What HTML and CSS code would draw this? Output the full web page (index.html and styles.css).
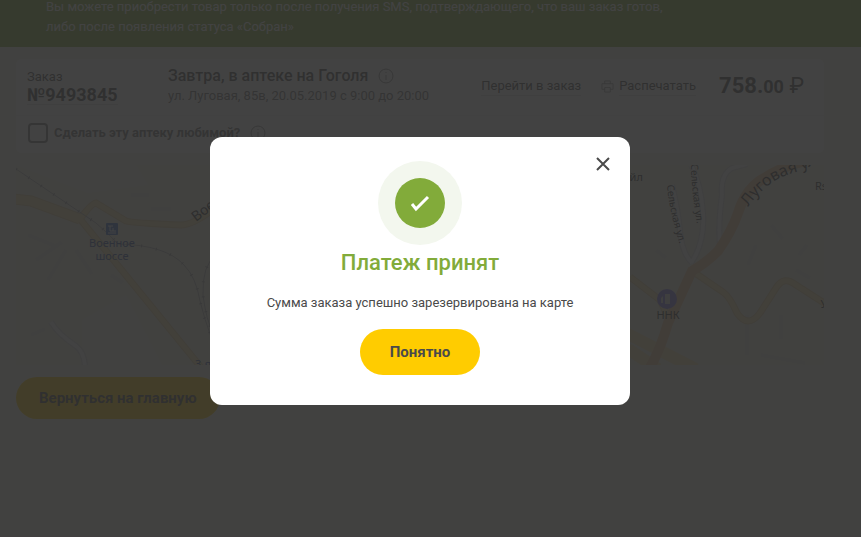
FILE: index.html
```
<!DOCTYPE html>
<html lang="ru">
    <head>
        <meta charset="UTF-8">
        <meta name="viewport" content="width=device-width, initial-scale=1">
        <title>Платеж принят</title>
        <link rel="stylesheet" href="styles.css">
    </head>
    <body>
        <div class="notice">
            <p>Вы можете приобрести товар только после получения SMS, подтверждающего, что ваш заказ готов, либо после появления статуса «Собран»</p>
        </div>

        <main class="content">
            <section class="order">
                <div class="order-head">
                    <div class="order-number">
                        <span>Заказ</span>
                        <a href="#">№9493845</a>
                    </div>
                    <div class="order-place">
                        <h2>Завтра, в аптеке на Гоголя
                            <svg class="info" viewBox="0 0 16 16"><circle cx="8" cy="8" r="7"/><path d="M8 7v5M8 4v1"/></svg>
                        </h2>
                        <p>ул. Луговая, 85в, 20.05.2019 с 9:00 до 20:00</p>
                    </div>
                    <a class="order-link" href="#">Перейти в заказ</a>
                    <div class="print">
                        <svg viewBox="0 0 14 14"><path d="M4 4V1h6v3M4 10H1V4h12v6h-3M4 8h6v5H4z"/></svg>
                        <a class="order-link" href="#">Распечатать</a>
                    </div>
                    <div class="price">758.<small>00</small> <span>₽</span></div>
                </div>
                <div class="favorite">
                    <input type="checkbox" id="favorite">
                    <label for="favorite">Сделать эту аптеку любимой?</label>
                    <svg class="info" viewBox="0 0 16 16"><circle cx="8" cy="8" r="7"/><path d="M8 7v5M8 4v1"/></svg>
                </div>
            </section>

            <svg class="map" viewBox="0 0 808 200" preserveAspectRatio="xMidYMid slice">
                <rect class="land" width="808" height="200"/>
                <!-- blocks -->
                <path class="block" d="M66 155l44-25 36 70H66zM0 0h120l12 20-60 8z"/>
                <path class="shade" d="M12 70l30 12M20 95l26-18M32 115l18-30M60 85l16 24M95 110l12 8M15 170l14-6M115 30h18M135 44h20M640 85l10 8M755 60l12 14M780 105l14 8M740 80l-8 20M731 150v40M765 150v24M783 90l8-10M745 190l44 8"/>
                <!-- side streets -->
                <path class="street-edge" d="M35 157q7 12 25 24q8 6 9 20M675 98q14-20 12-50q-2-30-12-48M676 98Q666 88 664 66T656 20M704 80q-2-20 2-50q-2-20 10-27l15-4"/>
                <path class="street" d="M35 157q7 12 25 24q8 6 9 20M675 98q14-20 12-50q-2-30-12-48M676 98Q666 88 664 66T656 20M704 80q-2-20 2-50q-2-20 10-27l15-4"/>
                <!-- main roads -->
                <path class="road-edge wide" d="M-2 34L15 36L64 54"/>
                <path class="road-edge" d="M64 54L188 206M64 54Q76 38 80 38L110 56Q116 58 165 60Q176 60 195 46M614 112L644 135L652 152M679 108L707 127Q714 132 721 148Q732 164 744 148L760 123Q768 110 780 120L808 138"/>
                <path class="road wide" d="M-2 34L15 36L64 54"/>
                <path class="road" d="M64 54L188 206M64 54Q76 38 80 38L110 56Q116 58 165 60Q176 60 195 46M614 112L644 135L652 152M679 108L707 127Q714 132 721 148Q732 164 744 148L760 123Q768 110 780 120L808 138"/>
                <path class="road ramp" d="M610 168L680 204M612 184l30 20"/>
                <path class="highway" d="M632 206Q644 186 652 158L676 106Q690 98 702 86Q716 66 722 48Q730 22 750 12Q765 2 790 -4"/>
                <!-- railway -->
                <path class="rail" d="M0 4L80 58Q92 68 102 79Q150 80 168 100Q180 112 184 136Q194 176 205 190M200 90Q186 100 187 130Q190 155 198 170"/>
                <path class="rail-ties" d="M0 4L80 58Q92 68 102 79Q150 80 168 100Q180 112 184 136Q194 176 205 190M200 90Q186 100 187 130Q190 155 198 170"/>
                <!-- station -->
                <rect class="station" x="90" y="58" width="12" height="12" rx="1"/>
                <path class="sign" d="M92 61h5M94 61v5h6M97 63v3M92 68h8"/>
                <text class="station-name" x="96" y="82">Военное</text>
                <text class="station-name" x="96" y="95">шоссе</text>
                <text class="station-name" x="187" y="203">3-я</text>
                <!-- fuel -->
                <circle class="fuel" cx="651" cy="134" r="10"/>
                <path class="pump" d="M649 129h5v10h-5zM647 138h-2v-5l2-2"/>
                <text class="place" x="652" y="154">ННК</text>
                <text class="place" x="617" y="16">ойл</text>
                <text class="place" x="805" y="25">Rs</text>
                <text class="place" x="808" y="143">У</text>
                <!-- street names -->
                <defs>
                    <path id="lugovaya" d="M732 42Q752 14 780 7Q800 0 830 -18"/>
                    <path id="selskaya-1" d="M651 20Q653 46 664 80"/>
                    <path id="selskaya-2" d="M675 -1Q675 24 682 66"/>
                    <path id="voennoe" d="M180 57L210 34"/>
                </defs>
                <text class="street-name big"><textPath href="#lugovaya">Луговая ул.</textPath></text>
                <text class="street-name"><textPath href="#selskaya-1">Сельская ул.</textPath></text>
                <text class="street-name"><textPath href="#selskaya-2">Сельская ул.</textPath></text>
                <text class="street-name medium"><textPath href="#voennoe">Воен</textPath></text>
            </svg>

            <button class="btn btn-home">Вернуться на главную</button>
        </main>

        <div class="overlay">
            <div class="modal" role="dialog" aria-labelledby="modal-title">
                <button class="close" aria-label="Закрыть">
                    <svg viewBox="0 0 14 14"><path d="M1 1l12 12M13 1L1 13"/></svg>
                </button>
                <div class="success">
                    <svg viewBox="0 0 84 84">
                        <circle class="halo" cx="42" cy="42" r="42"/>
                        <circle class="disc" cx="42" cy="42" r="25"/>
                        <path d="M34 43l4 5 12-12"/>
                    </svg>
                </div>
                <h1 id="modal-title">Платеж принят</h1>
                <p>Сумма заказа успешно зарезервирована на карте</p>
                <button class="btn btn-ok">Понятно</button>
            </div>
        </div>
    </body>
</html>
```
FILE: styles.css
```
* {
    box-sizing: border-box;
}
body {
    margin: 0;
    min-height: 100vh;
    background-color: #f6f6e6;
    border-bottom: 1px solid #ffe0e6;
    color: #4a4a4a;
    font-family: Roboto, sans-serif;
    font-size: 13px;
    line-height: 20px;
}
h1, h2, p {
    margin: 0;
}
a {
    color: inherit;
    text-decoration: none;
    border-bottom: 1px solid #dcdcdc;
}
button {
    font-family: inherit;
    cursor: pointer;
}

.notice {
    margin-top: -3px;
    padding: 0 0 10px 46px;
    background-color: #82ab3a;
    color: #fff;
}
.notice p {
    max-width: 640px;
}

.content {
    display: flex;
    flex-direction: column;
    align-items: flex-start;
    gap: 12px;
    padding: 12px 37px 16px 16px;
}

/* Order card */
.order {
    width: 100%;
    background-color: #fff;
    border-radius: 6px;
}
.order-head {
    display: grid;
    grid-template-columns: 141px 1fr auto auto auto;
    align-items: center;
    height: 57px;
    padding: 0 20px 2px 11px;
    border-bottom: 1px solid #eee;
}
.order-number {
    display: flex;
    flex-direction: column;
    align-items: flex-start;
    line-height: 18px;
}
.order-number a {
    font-size: 18px;
    font-weight: bold;
}
.order-place h2 {
    display: flex;
    align-items: center;
    gap: 10px;
    font-size: 16px;
    font-weight: 500;
}
.order-place p {
    color: #707070;
}
.order-link {
    line-height: 18px;
}
.print {
    display: flex;
    align-items: center;
    gap: 5px;
    margin: 0 23px 0 20px;
}
.print svg {
    width: 13px;
    height: 13px;
    fill: none;
    stroke: #999;
}
.price {
    font-size: 22px;
    font-weight: bold;
    line-height: 30px;
}
.price small {
    font-size: 18px;
}
.price span {
    font-weight: normal;
}
.info {
    width: 16px;
    height: 16px;
    fill: none;
    stroke: #8c8c8c;
}
.favorite {
    display: flex;
    align-items: center;
    height: 37px;
    padding: 0 0 3px 12px;
    font-weight: bold;
    color: #707070;
}
.favorite input {
    appearance: none;
    width: 20px;
    height: 20px;
    margin: 0 6px 0 0;
    border: 2px solid #777;
    border-radius: 4px;
}
.favorite .info {
    margin-left: 10px;
}

/* Map */
.map {
    display: block;
    width: 100%;
    height: 200px;
    font-family: "Noto Sans", sans-serif;
}
.map path {
    fill: none;
}
.map .land {
    fill: #f1f1e2;
}
.map .block {
    fill: #ededE4;
}
.map .shade {
    stroke: #eaeae0;
    stroke-width: 4;
}
.map .street-edge {
    stroke: #d8d8d8;
    stroke-width: 6;
}
.map .street {
    stroke: #f8f8f8;
    stroke-width: 4;
}
.map .road-edge {
    stroke: #e8d09c;
    stroke-width: 7;
}
.map .road {
    stroke: #fae8ac;
    stroke-width: 5;
}
.map .road-edge.wide {
    stroke-width: 11;
}
.map .road.wide {
    stroke-width: 9;
}
.map .road.ramp {
    stroke-width: 12;
}
.map .highway {
    stroke: #f5c898;
    stroke-width: 10;
}
.map .rail {
    stroke: #b4b4b4;
}
.map .rail-ties {
    stroke: #a0a0a0;
    stroke-width: 3;
    stroke-dasharray: 1 14;
}
.map .station {
    fill: #3c6ec8;
}
.map .sign {
    stroke: #fff;
}
.map text {
    fill: #333;
    text-anchor: middle;
    font-size: 11px;
}
.map .station-name {
    fill: #3250a0;
}
.map .fuel {
    fill: #8278e6;
}
.map .pump {
    fill: #ddd;
}
.map .street-name {
    text-anchor: start;
    font-size: 10px;
}
.map .street-name.medium {
    font-size: 14px;
}
.map .street-name.big {
    font-size: 16px;
}

/* Buttons */
.btn {
    border: none;
    border-radius: 23px;
    background-color: #fc0;
    color: #4a4a4a;
    font-size: 15px;
    font-weight: bold;
}
.btn-home {
    height: 42px;
    padding: 0 23px;
}
.btn-ok {
    height: 46px;
    padding: 0 30px;
}

/* Modal */
.overlay {
    position: fixed;
    inset: 0;
    display: flex;
    align-items: center;
    justify-content: center;
    padding: 5px 21px 0 0;
    background-color: rgba(46, 46, 46, 0.9);
}
.modal {
    position: relative;
    display: flex;
    flex-direction: column;
    align-items: center;
    width: 420px;
    max-width: 100%;
    padding: 24px 24px 30px;
    border-radius: 12px;
    background-color: #fff;
    text-align: center;
}
.close {
    position: absolute;
    top: 20px;
    right: 20px;
    width: 14px;
    height: 14px;
    padding: 0;
    border: none;
    background: none;
}
.close svg {
    display: block;
    fill: none;
    stroke: #4a4a4a;
    stroke-width: 2;
}
.success svg {
    display: block;
    width: 84px;
    height: 84px;
    fill: none;
    stroke: #fff;
    stroke-width: 3;
}
.success .halo {
    fill: #f3f7ee;
    stroke: none;
}
.success .disc {
    fill: #82ab3a;
    stroke: none;
}
.modal h1 {
    margin-bottom: 12px;
    color: #82ab3a;
    font-size: 22px;
    font-weight: 500;
    line-height: 36px;
}
.modal p {
    margin-bottom: 16px;
}
```
